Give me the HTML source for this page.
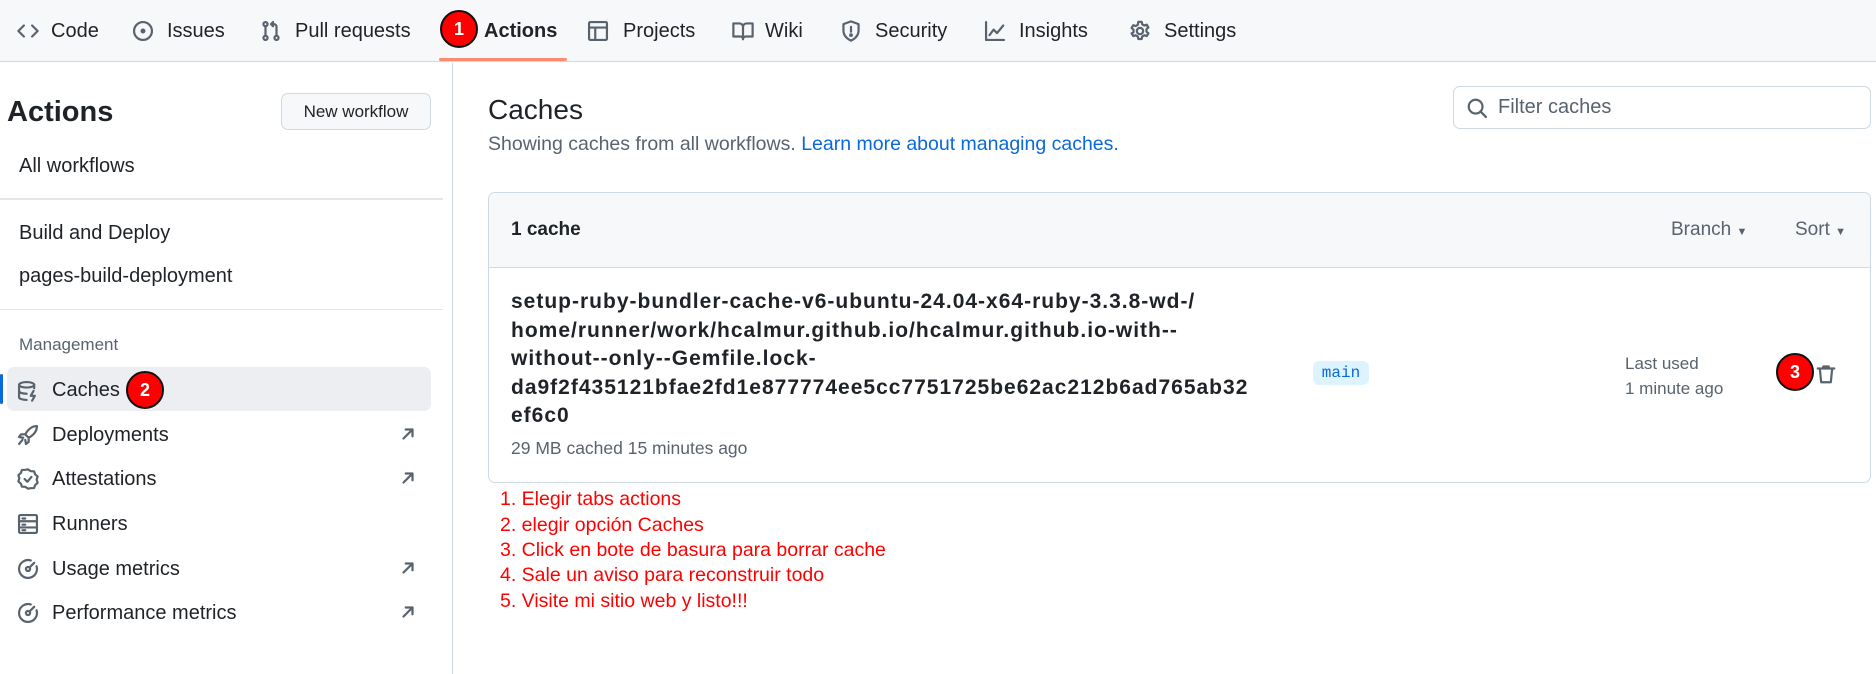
<!DOCTYPE html>
<html><head><meta charset="utf-8"><style>
*{margin:0;padding:0;box-sizing:border-box}
body{width:1876px;height:674px;overflow:hidden;background:#fff;font-family:"Liberation Sans","DejaVu Sans",sans-serif;color:#1f2328;position:relative}
.a{position:absolute;white-space:nowrap}
.nav{position:absolute;left:0;top:0;width:1876px;height:62px;background:#f6f8fa;border-bottom:1px solid #d1d9e0}
.nt{position:absolute;top:20px;font-size:20px;color:#1f2328}
.ic{position:absolute;top:20px}
svg{fill:none;stroke:#59636e;stroke-width:1.6;stroke-linecap:round;stroke-linejoin:round}
.badge{position:absolute;border-radius:50%;background:#f00;border:2px solid #111;color:#fff;font-weight:bold;text-align:center;font-size:18px}
.side{font-size:20px}
.hr{position:absolute;height:2px;background:#e3e7eb}
.note{position:absolute;left:500px;color:#f00;font-size:19.5px}
</style></head><body>
<div class="nav">
<svg class="ic" style="left:17px" width="22" height="22" viewBox="0 0 16 16"><path d="M5 4 1 8l4 4M11 4l4 4-4 4"/></svg>
<div class="nt" style="left:51px">Code</div>
<svg class="ic" style="left:132px" width="22" height="22" viewBox="0 0 16 16"><circle cx="8" cy="8" r="6.5"/><circle cx="8" cy="8" r="1" fill="#59636e"/></svg>
<div class="nt" style="left:167px">Issues</div>
<svg class="ic" style="left:260px" width="22" height="22" viewBox="0 0 16 16"><circle cx="4" cy="3" r="1.5"/><circle cx="4" cy="13" r="1.5"/><circle cx="12" cy="13" r="1.5"/><path d="M4 4.5v7M12 11.5V5a2 2 0 0 0-2-2H8M9.5 1.5 8 3l1.5 1.5"/></svg>
<div class="nt" style="left:295px">Pull requests</div>
<div class="badge" style="left:440px;top:10px;width:38px;height:38px;line-height:34px">1</div>
<div class="nt" style="left:484px;font-weight:bold">Actions</div>
<div class="a" style="left:439px;top:58px;width:128px;height:3px;background:#fd8c73;border-radius:2px"></div>
<svg class="ic" style="left:587px" width="22" height="22" viewBox="0 0 16 16"><rect x="1.5" y="1.5" width="13" height="13" rx="1"/><path d="M1.5 5.5h13M6 5.5v9"/></svg>
<div class="nt" style="left:623px">Projects</div>
<svg class="ic" style="left:731px" width="24" height="22" viewBox="0 0 16 16"><path d="M1 2.5h4.5A2.5 2.5 0 0 1 8 5v9a2 2 0 0 0-2-2H1zM15 2.5h-4.5A2.5 2.5 0 0 0 8 5v9a2 2 0 0 1 2-2h5z"/></svg>
<div class="nt" style="left:765px">Wiki</div>
<svg class="ic" style="left:840px" width="22" height="22" viewBox="0 0 16 16"><path d="M8 1 2.5 3v4.5C2.5 11 5 13.5 8 15c3-1.5 5.5-4 5.5-7.5V3z"/><path d="M8 5v3.5"/><circle cx="8" cy="11" r=".6" fill="#59636e"/></svg>
<div class="nt" style="left:875px">Security</div>
<svg class="ic" style="left:984px" width="22" height="22" viewBox="0 0 16 16"><path d="M1.5 1.5v13h13M4 11l3-4 2.5 2.5L14 4"/></svg>
<div class="nt" style="left:1019px">Insights</div>
<svg class="ic" style="left:1129px" width="22" height="22" viewBox="0 0 16 16"><circle cx="8" cy="8" r="2.3"/><path d="M6.8 1.3h2.4l.4 1.8 1.5.9 1.8-.6 1.2 2-1.4 1.3v1.7l1.4 1.3-1.2 2-1.8-.6-1.5.9-.4 1.8H6.8l-.4-1.8-1.5-.9-1.8.6-1.2-2L3.3 8.9V7.1L1.9 5.8l1.2-2 1.8.6 1.5-.9z"/></svg>
<div class="nt" style="left:1164px">Settings</div>
</div>

<div class="a" style="left:452px;top:63px;width:1px;height:611px;background:#d1d9e0"></div>
<div class="a" style="left:7px;top:96px;font-size:29px;font-weight:600">Actions</div>
<div class="a" style="left:281px;top:93px;width:150px;height:37px;border:1px solid #d1d9e0;border-radius:7px;background:#f6f8fa;font-size:17px;text-align:center;line-height:35px;font-weight:500">New workflow</div>
<div class="a side" style="left:19px;top:155px">All workflows</div>
<div class="hr" style="left:0;top:198px;width:443px"></div>
<div class="a side" style="left:19px;top:222px">Build and Deploy</div>
<div class="a side" style="left:19px;top:265px">pages-build-deployment</div>
<div class="hr" style="left:0;top:309px;width:443px;height:1px"></div>
<div class="a" style="left:19px;top:335px;font-size:17px;color:#59636e">Management</div>
<div class="a" style="left:7px;top:367px;width:424px;height:44px;background:#eceef1;border-radius:7px"></div>
<div class="a" style="left:0;top:374px;width:3px;height:30px;background:#0969da;border-radius:2px"></div>
<svg class="a" style="left:17px;top:380px" width="22" height="22" viewBox="0 0 16 16"><ellipse cx="7" cy="3.5" rx="5.5" ry="2"/><path d="M1.5 3.5v9c0 1.1 2.5 2 5.5 2M12.5 3.5V6M1.5 8c0 1.1 2.5 2 5.5 2M12 8l-2 3.5h3L11 15"/></svg>
<div class="a side" style="left:52px;top:379px;font-weight:500">Caches</div>
<div class="badge" style="left:126px;top:371px;width:38px;height:38px;line-height:34px">2</div>
<svg class="a" style="left:17px;top:424px" width="22" height="22" viewBox="0 0 16 16"><path d="M14.5 1.5c-4 0-6.5 2.5-8.5 6l2.5 2.5c3.5-2 6-4.5 6-8.5zM6 7.5H3l-1.5 2 3 .5M8.5 10v3l-2 1.5-.5-3M4 11.5l-2.5 3"/></svg>
<div class="a side" style="left:52px;top:424px">Deployments</div>
<svg class="a" style="left:17px;top:468px" width="22" height="22" viewBox="0 0 16 16"><path d="M8 1l2 1.3 2.4.1.8 2.2 1.8 1.6-.7 2.3.7 2.3-1.8 1.6-.8 2.2-2.4.1L8 15l-2-1.3-2.4-.1-.8-2.2L1 9.8l.7-2.3L1 5.2l1.8-1.6.8-2.2L6 1.3z"/><path d="m5.5 8 2 2 3-3.5"/></svg>
<div class="a side" style="left:52px;top:468px">Attestations</div>
<svg class="a" style="left:17px;top:513px" width="22" height="22" viewBox="0 0 16 16"><rect x="1.5" y="1.5" width="13" height="13" rx="1"/><path d="M1.5 6h13M1.5 10.5h13M4 4h2M4 8.5h2M4 12.5h2"/></svg>
<div class="a side" style="left:52px;top:513px">Runners</div>
<svg class="a" style="left:17px;top:558px" width="22" height="22" viewBox="0 0 16 16"><path d="M10 1.8A6.5 6.5 0 1 0 14.2 6"/><circle cx="8" cy="8" r="1.5"/><path d="m9 7 3.5-3.5"/></svg>
<div class="a side" style="left:52px;top:558px">Usage metrics</div>
<svg class="a" style="left:17px;top:602px" width="22" height="22" viewBox="0 0 16 16"><path d="M10 1.8A6.5 6.5 0 1 0 14.2 6"/><circle cx="8" cy="8" r="1.5"/><path d="m9 7 3.5-3.5"/></svg>
<div class="a side" style="left:52px;top:602px">Performance metrics</div>
<svg class="a" style="left:399px;top:425px" width="18" height="18" viewBox="0 0 16 16"><path d="M4 12 12 4M6 4h6v6" stroke-width="2"/></svg>
<svg class="a" style="left:399px;top:469px" width="18" height="18" viewBox="0 0 16 16"><path d="M4 12 12 4M6 4h6v6" stroke-width="2"/></svg>
<svg class="a" style="left:399px;top:559px" width="18" height="18" viewBox="0 0 16 16"><path d="M4 12 12 4M6 4h6v6" stroke-width="2"/></svg>
<svg class="a" style="left:399px;top:603px" width="18" height="18" viewBox="0 0 16 16"><path d="M4 12 12 4M6 4h6v6" stroke-width="2"/></svg>

<div class="a" style="left:488px;top:94px;font-size:28px">Caches</div>
<div class="a" style="left:488px;top:133px;font-size:19.5px;color:#59636e">Showing caches from all workflows. <span style="color:#0969da">Learn more about managing caches.</span></div>
<div class="a" style="left:1453px;top:86px;width:418px;height:43px;border:1px solid #d1d9e0;border-radius:7px"></div>
<svg class="a" style="left:1466px;top:97px" width="22" height="22" viewBox="0 0 16 16"><circle cx="7" cy="7" r="5"/><path d="m10.5 10.5 4 4"/></svg>
<div class="a" style="left:1498px;top:96px;font-size:20px;color:#59636e">Filter caches</div>

<div class="a" style="left:488px;top:192px;width:1383px;height:291px;border:1px solid #d1d9e0;border-radius:7px;overflow:hidden">
 <div style="height:75px;background:#f6f8fa;border-bottom:1px solid #d1d9e0"></div>
</div>
<div class="a" style="left:511px;top:219px;font-size:19px;font-weight:bold">1 cache</div>
<div class="a" style="left:1671px;top:219px;font-size:19px;color:#59636e">Branch <span style="font-size:11px">▼</span></div>
<div class="a" style="left:1795px;top:219px;font-size:19px;color:#59636e">Sort <span style="font-size:11px">▼</span></div>
<div class="a" style="left:511px;top:288px;font-size:21px;letter-spacing:1px;font-weight:bold;line-height:28.5px">setup-ruby-bundler-cache-v6-ubuntu-24.04-x64-ruby-3.3.8-wd-/<br>home/runner/work/hcalmur.github.io/hcalmur.github.io-with--<br>without--only--Gemfile.lock-<br>da9f2f435121bfae2fd1e877774ee5cc7751725be62ac212b6ad765ab32<br>ef6c0</div>
<div class="a" style="left:511px;top:438px;font-size:17.5px;color:#59636e">29 MB cached 15 minutes ago</div>
<div class="a" style="left:1313px;top:361px;width:56px;height:24px;background:#ddf4ff;border-radius:6px;color:#0969da;font-family:'Liberation Mono',monospace;font-size:16px;text-align:center;line-height:24px">main</div>
<div class="a" style="left:1625px;top:354px;font-size:17px;color:#59636e">Last used</div>
<div class="a" style="left:1625px;top:379px;font-size:17px;color:#59636e">1 minute ago</div>
<div class="badge" style="left:1776px;top:353px;width:38px;height:38px;line-height:34px">3</div>
<svg class="a" style="left:1815px;top:363px" width="22" height="22" viewBox="0 0 16 16"><path d="M2 4h12M6 4V2.5h4V4M3.5 4l1 10h7l1-10"/></svg>

<div class="note" style="top:488px">1. Elegir tabs actions</div>
<div class="note" style="top:514px">2. elegir opción Caches</div>
<div class="note" style="top:539px">3. Click en bote de basura para borrar cache</div>
<div class="note" style="top:564px">4. Sale un aviso para reconstruir todo</div>
<div class="note" style="top:590px">5. Visite mi sitio web y listo!!!</div>
</body></html>
